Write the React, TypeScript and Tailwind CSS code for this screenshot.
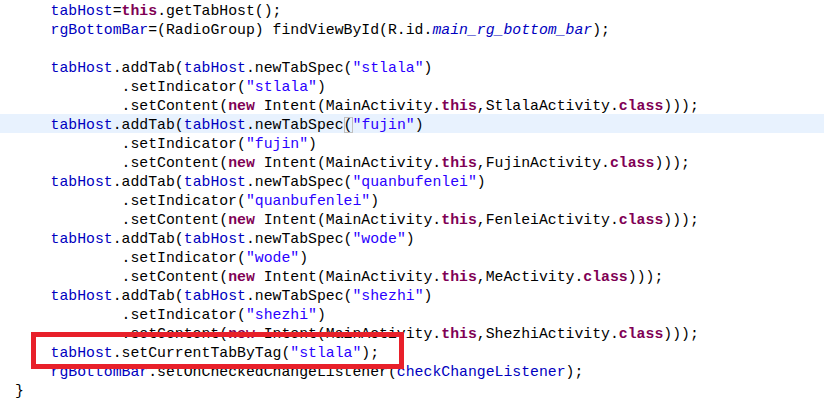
type Tok = [string, string?];

const F = "text-[#0000c0]";
const K = "text-[#7f0055] font-bold";
const S = "text-[#2a00ff]";
const I = "text-[#0000c0] italic";

const ind = "    ";
const cont = "            ";

function addTab(tag: string): Tok[] {
  return [[ind], ["tabHost", F], [".addTab("], ["tabHost", F], [".newTabSpec("], [`"${tag}"`, S], [")"]];
}
function indicator(tag: string): Tok[] {
  return [[cont + ".setIndicator("], [`"${tag}"`, S], [")"]];
}
function content(act: string): Tok[] {
  return [
    [cont + ".setContent("],
    ["new", K],
    [" Intent(MainActivity."],
    ["this", K],
    [`,${act}.`],
    ["class", K],
    [")));"],
  ];
}

const lines: Tok[][] = [
  [[ind], ["tabHost", F], ["="], ["this", K], [".getTabHost();"]],
  [[ind], ["rgBottomBar", F], ["=(RadioGroup) findViewById(R.id."], ["main_rg_bottom_bar", I], [");"]],
  [],
  addTab("stlala"),
  indicator("stlala"),
  content("StlalaActivity"),
  [[ind], ["tabHost", F], [".addTab("], ["tabHost", F], [".newTabSpec"], ["(", "match"], ['"fujin"', S], [")"]],
  indicator("fujin"),
  content("FujinActivity"),
  addTab("quanbufenlei"),
  indicator("quanbufenlei"),
  content("FenleiActivity"),
  addTab("wode"),
  indicator("wode"),
  content("MeActivity"),
  addTab("shezhi"),
  indicator("shezhi"),
  content("ShezhiActivity"),
  [[ind], ["tabHost", F], [".setCurrentTabByTag("], ['"stlala"', S], [");"]],
  [[ind], ["rgBottomBar", F], [".setOnCheckedChangeListener("], ["checkChangeListener", F], [");"]],
  [["}"]],
];

export default function App() {
  return (
    <div
      className="relative w-[824px] h-[416px] overflow-hidden bg-white text-black text-[14.8px]"
      style={{ fontFamily: '"Liberation Mono", "DejaVu Sans Mono", monospace' }}
    >
      {lines.map((ln, i) => (
        <div
          key={i}
          className={`h-[19px] pt-[2px] leading-[19px] whitespace-pre pl-[15px] ${i === 6 ? "bg-[#e8f2fe]" : ""}`}
        >
          {ln.map(([t, c], j) =>
            c === "match" ? (
              <span key={j} className="outline outline-1 -outline-offset-1 outline-[#c0c0c0]">
                {t}
              </span>
            ) : (
              <span key={j} className={c}>
                {t}
              </span>
            )
          )}
        </div>
      ))}
      <div className="absolute left-[31px] top-[332px] w-[373px] h-[37px] border-[5px] border-[#e8202a]" />
    </div>
  );
}
